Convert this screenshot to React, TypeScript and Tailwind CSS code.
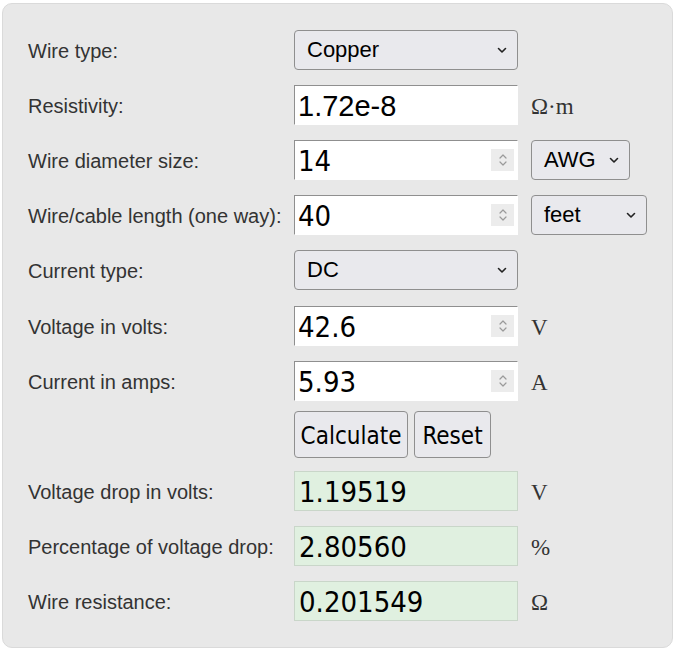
import React from "react";

const labelCls = "w-[266px] shrink-0 text-[20px] text-[#333] leading-none pt-[2px]";
const sans = { fontFamily: '"Liberation Sans", Arial, sans-serif' };
const tahomaLike = { fontFamily: '"DejaVu Sans Condensed", "DejaVu Sans", sans-serif' };
const serif = { fontFamily: '"Liberation Serif", "Times New Roman", serif' };

function Chevron() {
  return (
    <svg width="10" height="7" viewBox="0 0 10 7" className="shrink-0">
      <path d="M1.5 1.5 L5 5 L8.5 1.5" fill="none" stroke="#222" strokeWidth="1.6" strokeLinecap="round" strokeLinejoin="round" />
    </svg>
  );
}

function Select({ value, w }: { value: string; w: string }) {
  return (
    <div
      className={`${w} h-[40px] flex items-center justify-between pl-[12px] pr-[10px] rounded-[4px] border border-[#8f8f8f] bg-[#e9e9ed] text-[22px] text-black`}
      style={sans}
    >
      <span className="leading-none">{value}</span>
      <Chevron />
    </div>
  );
}

function Spinner() {
  return (
    <div className="w-[23px] h-[22px] bg-[#ececec] flex items-center justify-center">
      <svg width="10" height="16" viewBox="0 0 10 16">
        <path d="M2 6 L5 3 L8 6" fill="none" stroke="#9a9a9a" strokeWidth="1.2" strokeLinecap="round" strokeLinejoin="round" />
        <path d="M2 10 L5 13 L8 10" fill="none" stroke="#9a9a9a" strokeWidth="1.2" strokeLinecap="round" strokeLinejoin="round" />
      </svg>
    </div>
  );
}

function NumberInput({ value }: { value: string }) {
  return (
    <div className="w-[224px] h-[40px] flex items-center justify-between pl-[3px] pr-[3px] bg-white border border-t-[#8f8f8f] border-l-[#8f8f8f] border-r-white border-b-white">
      <span className="text-[29px] text-black leading-none pt-[3px]" style={tahomaLike}>
        {value}
      </span>
      <Spinner />
    </div>
  );
}

function Unit({ children }: { children: React.ReactNode }) {
  return (
    <span className="ml-[13px] text-[23px] text-[#333] leading-none pt-[2px]" style={serif}>
      {children}
    </span>
  );
}

function Result({ value }: { value: string }) {
  return (
    <div className="w-[224px] h-[40px] flex items-center pl-[4px] bg-[#e0f0e0] border border-[#c9d6c9]">
      <span className="text-[29px] text-black leading-none pt-[3px]" style={tahomaLike}>
        {value}
      </span>
    </div>
  );
}

function Row({ label, children, className = "mt-[15px]" }: { label: string; children: React.ReactNode; className?: string }) {
  return (
    <div className={`flex items-center h-[40px] ${className}`}>
      <span className={labelCls} style={sans}>
        {label}
      </span>
      {children}
    </div>
  );
}

export default function App() {
  return (
    <div className="w-[680px] h-[652px] bg-white pt-[3px] pl-[2px]">
      <div className="w-[671px] h-[645px] rounded-[10px] border border-[#dadada] bg-[#e8e8e8] pt-[26px] pl-[25px]">
        <Row label="Wire type:" className="">
          <Select value="Copper" w="w-[224px]" />
        </Row>
        <Row label="Resistivity:">
          <div className="w-[224px] h-[40px] flex items-center pl-[3px] bg-white border border-t-[#8f8f8f] border-l-[#8f8f8f] border-r-white border-b-white">
            <span className="text-[29px] text-black leading-none pt-[3px]" style={sans}>
              1.72e-8
            </span>
          </div>
          <Unit>Ω·m</Unit>
        </Row>
        <Row label="Wire diameter size:">
          <NumberInput value="14" />
          <div className="ml-[13px]">
            <Select value="AWG" w="w-[99px]" />
          </div>
        </Row>
        <Row label="Wire/cable length (one way):">
          <NumberInput value="40" />
          <div className="ml-[13px]">
            <Select value="feet" w="w-[116px]" />
          </div>
        </Row>
        <Row label="Current type:">
          <Select value="DC" w="w-[224px]" />
        </Row>
        <Row label="Voltage in volts:" className="mt-[16px]">
          <NumberInput value="42.6" />
          <Unit>V</Unit>
        </Row>
        <Row label="Current in amps:">
          <NumberInput value="5.93" />
          <Unit>A</Unit>
        </Row>
        <div className="flex mt-[10px] h-[47px]">
          <div className="w-[266px] shrink-0" />
          <div className="flex gap-[6px]">
            <button
              className="w-[114px] h-[47px] rounded-[4px] border border-[#8f8f8f] bg-[#e9e9ed] text-[24px] text-black leading-none pt-[2px]"
              style={tahomaLike}
            >
              Calculate
            </button>
            <button
              className="w-[77px] h-[47px] rounded-[4px] border border-[#8f8f8f] bg-[#e9e9ed] text-[24px] text-black leading-none pt-[2px]"
              style={tahomaLike}
            >
              Reset
            </button>
          </div>
        </div>
        <Row label="Voltage drop in volts:" className="mt-[13px]">
          <Result value="1.19519" />
          <Unit>V</Unit>
        </Row>
        <Row label="Percentage of voltage drop:">
          <Result value="2.80560" />
          <Unit>%</Unit>
        </Row>
        <Row label="Wire resistance:">
          <Result value="0.201549" />
          <Unit>Ω</Unit>
        </Row>
      </div>
    </div>
  );
}
